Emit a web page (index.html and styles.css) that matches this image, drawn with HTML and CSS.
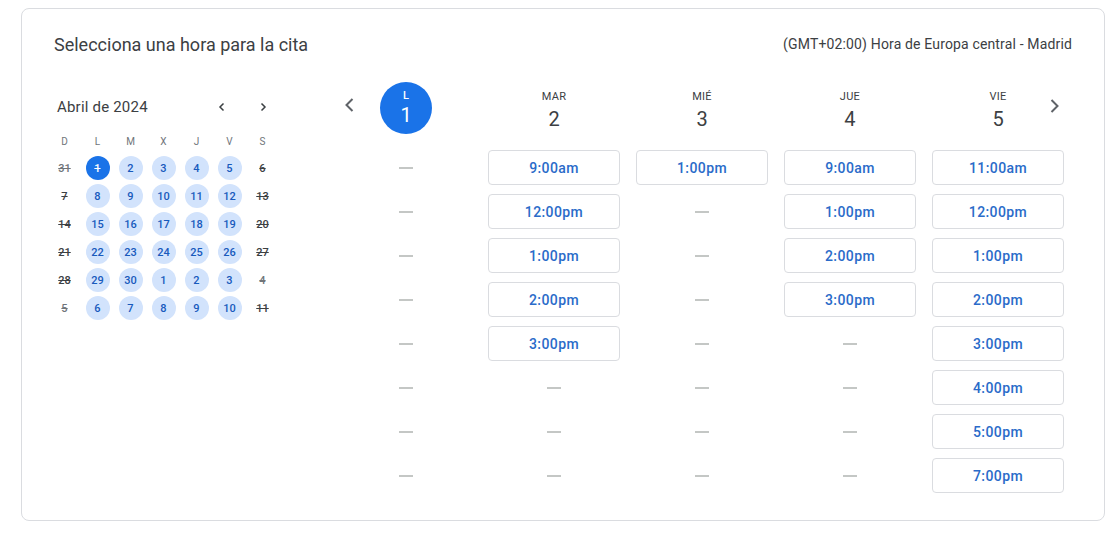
FILE: index.html
```html
<!DOCTYPE html>
<html lang="es">
<head>
<meta charset="utf-8">
<title>Selecciona una hora</title>
<link rel="stylesheet" href="styles.css">
</head>
<body>
<div class="card">
  <div class="header">
    <h1 class="title">Selecciona una hora para la cita</h1>
    <div class="tz">(GMT+02:00) Hora de Europa central - Madrid</div>
  </div>
  <div class="body">
    <div class="mini">
      <div class="mini-head">
        <span class="mini-month">Abril de 2024</span>
        <div class="mini-nav">
          <span class="mini-btn"><svg width="10" height="10" viewBox="0 0 10 10"><path d="M6.5 1.5 L3 5 L6.5 8.5" fill="none" stroke="#3c4043" stroke-width="1.5"/></svg></span>
          <span class="mini-btn"><svg width="10" height="10" viewBox="0 0 10 10"><path d="M3.5 1.5 L7 5 L3.5 8.5" fill="none" stroke="#3c4043" stroke-width="1.5"/></svg></span>
        </div>
      </div>
      <div class="mini-grid">
        <span class="dow">D</span><span class="dow">L</span><span class="dow">M</span><span class="dow">X</span><span class="dow">J</span><span class="dow">V</span><span class="dow">S</span>
        <span class="d off other">31</span><span class="d sel">1</span><span class="d av">2</span><span class="d av">3</span><span class="d av">4</span><span class="d av">5</span><span class="d off">6</span>
        <span class="d off">7</span><span class="d av">8</span><span class="d av">9</span><span class="d av">10</span><span class="d av">11</span><span class="d av">12</span><span class="d off">13</span>
        <span class="d off">14</span><span class="d av">15</span><span class="d av">16</span><span class="d av">17</span><span class="d av">18</span><span class="d av">19</span><span class="d off">20</span>
        <span class="d off">21</span><span class="d av">22</span><span class="d av">23</span><span class="d av">24</span><span class="d av">25</span><span class="d av">26</span><span class="d off">27</span>
        <span class="d off">28</span><span class="d av">29</span><span class="d av">30</span><span class="d av">1</span><span class="d av">2</span><span class="d av">3</span><span class="d off other">4</span>
        <span class="d off other">5</span><span class="d av">6</span><span class="d av">7</span><span class="d av">8</span><span class="d av">9</span><span class="d av">10</span><span class="d off">11</span>
      </div>
    </div>
    <div class="week">
      <span class="wk-arrow wk-prev"><svg width="16" height="16" viewBox="0 0 16 16"><path d="M10.5 2 L4.5 8 L10.5 14" fill="none" stroke="#5f6368" stroke-width="2"/></svg></span>
      <span class="wk-arrow wk-next"><svg width="16" height="16" viewBox="0 0 16 16"><path d="M5.5 2 L11.5 8 L5.5 14" fill="none" stroke="#5f6368" stroke-width="2"/></svg></span>
      <div class="col">
        <div class="col-head"><div class="today"><span class="t-name">L</span><span class="t-num">1</span></div></div>
        <div class="slots">
          <span class="dash"></span><span class="dash"></span><span class="dash"></span><span class="dash"></span><span class="dash"></span><span class="dash"></span><span class="dash"></span><span class="dash"></span>
        </div>
      </div>
      <div class="col">
        <div class="col-head"><span class="c-name">MAR</span><span class="c-num">2</span></div>
        <div class="slots">
          <button class="slot">9:00am</button><button class="slot">12:00pm</button><button class="slot">1:00pm</button><button class="slot">2:00pm</button><button class="slot">3:00pm</button><span class="dash"></span><span class="dash"></span><span class="dash"></span>
        </div>
      </div>
      <div class="col">
        <div class="col-head"><span class="c-name">MIÉ</span><span class="c-num">3</span></div>
        <div class="slots">
          <button class="slot">1:00pm</button><span class="dash"></span><span class="dash"></span><span class="dash"></span><span class="dash"></span><span class="dash"></span><span class="dash"></span><span class="dash"></span>
        </div>
      </div>
      <div class="col">
        <div class="col-head"><span class="c-name">JUE</span><span class="c-num">4</span></div>
        <div class="slots">
          <button class="slot">9:00am</button><button class="slot">1:00pm</button><button class="slot">2:00pm</button><button class="slot">3:00pm</button><span class="dash"></span><span class="dash"></span><span class="dash"></span><span class="dash"></span>
        </div>
      </div>
      <div class="col">
        <div class="col-head"><span class="c-name">VIE</span><span class="c-num">5</span></div>
        <div class="slots">
          <button class="slot">11:00am</button><button class="slot">12:00pm</button><button class="slot">1:00pm</button><button class="slot">2:00pm</button><button class="slot">3:00pm</button><button class="slot">4:00pm</button><button class="slot">5:00pm</button><button class="slot">7:00pm</button>
        </div>
      </div>
    </div>
  </div>
</div>
</body>
</html>
```
FILE: styles.css
```css
* { box-sizing: border-box; }
html, body { margin: 0; padding: 0; background: #fff; }
body {
  font-family: Roboto, "Liberation Sans", Arial, sans-serif;
  color: #3c4043;
  padding: 8px 15px 0 21px;
}
.card {
  width: 1084px;
  border: 1px solid #dadce0;
  border-radius: 8px;
  padding: 24px 32px 27px 26px;
}
.header {
  display: flex;
  justify-content: space-between;
  align-items: center;
  height: 24px;
  padding-left: 6px;
}
.title {
  margin: 0;
  font-size: 18px;
  font-weight: 400;
  line-height: 24px;
  color: #3c4043;
}
.tz {
  font-size: 14px;
  line-height: 20px;
  letter-spacing: 0.15px;
  color: #3c4043;
  margin-top: -2px;
}
.body {
  display: flex;
  margin-top: 25px;
}
.mini {
  width: 231px;
  padding-top: 9px;
  margin-right: 53px;
}
.mini-head {
  display: flex;
  align-items: center;
  justify-content: space-between;
  height: 32px;
}
.mini-month {
  font-size: 15px;
  font-weight: 400;
  letter-spacing: 0.2px;
  color: #3c4043;
  padding-left: 9px;
}
.mini-nav {
  display: flex;
  gap: 9px;
}
.mini-btn {
  width: 32px;
  height: 32px;
  display: flex;
  align-items: center;
  justify-content: center;
}
.mini-grid {
  margin-top: 6px;
  display: grid;
  grid-template-columns: repeat(7, 33px);
  grid-auto-rows: 28px;
  grid-template-rows: 25px;
  justify-items: center;
  align-items: center;
}
.dow {
  font-size: 10px;
  font-weight: 400;
  color: #70757a;
}
.d {
  width: 24px;
  height: 24px;
  border-radius: 50%;
  display: flex;
  align-items: center;
  justify-content: center;
  font-size: 11px;
  font-weight: 500;
}
.d.av { background: #d2e3fc; color: #185abc; }
.d.sel { background: #1a73e8; color: #fff; text-decoration: line-through; }
.d.off { color: #3c4043; text-decoration: line-through; }
.d.other { color: #70757a; }
.week {
  position: relative;
  display: flex;
}
.wk-arrow {
  position: absolute;
  top: 15px;
  width: 16px;
  height: 16px;
  display: flex;
}
.wk-prev { left: 10px; }
.wk-next { right: 10px; top: 16px; }
.col {
  width: 148px;
  display: flex;
  flex-direction: column;
  align-items: center;
}
.col-head {
  height: 52px;
  display: flex;
  flex-direction: column;
  align-items: center;
  padding-top: 7px;
}
.c-name {
  font-size: 11px;
  font-weight: 400;
  line-height: 16px;
  color: #3c4043;
  letter-spacing: 0.3px;
}
.c-num {
  font-size: 20px;
  line-height: 28px;
  color: #3c4043;
}
.col-head:has(.today) { padding-top: 0; }
.today {
  width: 52px;
  height: 52px;
  border-radius: 50%;
  background: #1a73e8;
  color: #fff;
  display: flex;
  flex-direction: column;
  align-items: center;
  justify-content: center;
}
.t-name { font-size: 11px; font-weight: 500; line-height: 14px; }
.t-num { font-size: 20px; line-height: 24px; }
.slots {
  margin-top: 16px;
  display: flex;
  flex-direction: column;
  align-items: center;
  gap: 9px;
}
.slot {
  width: 132px;
  height: 35px;
  border: 1px solid #dadce0;
  border-radius: 4px;
  background: #fff;
  font-family: Roboto, "Liberation Sans", Arial, sans-serif;
  font-size: 14px;
  font-weight: 500;
  letter-spacing: 0.4px;
  color: #2a6bc9;
  padding: 0;
}
.dash {
  height: 35px;
  width: 14px;
  display: flex;
  align-items: center;
}
.dash::before {
  content: "";
  display: block;
  width: 14px;
  height: 2px;
  background: #c4c7c5;
}
```
